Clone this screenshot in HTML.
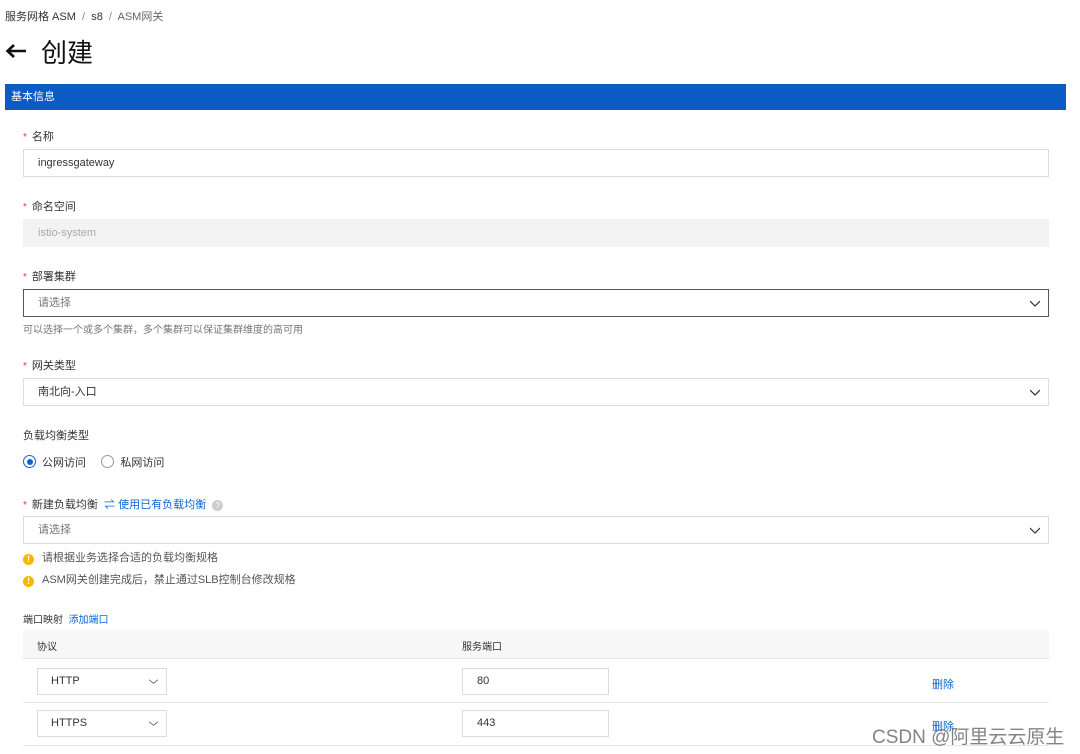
<!DOCTYPE html>
<html><head><meta charset="utf-8"><style>
*{box-sizing:border-box;margin:0;padding:0}
body{width:1080px;height:754px;background:#fff;font-family:"Liberation Sans","Noto Sans CJK SC",sans-serif;color:#333;position:relative;overflow:hidden;font-size:11px}
.a{position:absolute}
.lbl{font-size:11px;color:#333}
.req::before{content:"*";color:#e33;margin-right:5px;font-size:10px}
.inp{position:absolute;left:23px;width:1026px;height:28px;border:1px solid #dcdcdc;padding-left:14px;line-height:26px;font-size:11px}
.chev{position:absolute;right:8px;top:8px;width:10px;height:10px}
.sm .chev{width:9px;height:9px;right:8px;top:8px}
.warn{display:inline-block;width:11px;height:11px;border-radius:50%;background:#f5b700;color:#fff;font-size:9px;font-weight:bold;text-align:center;line-height:11px;margin-right:8px;vertical-align:-1px}
.link{color:#0b64d6}
</style></head><body>
<div class="a" style="left:5px;top:8px;font-size:11px;color:#333">服务网格 ASM &nbsp;<span style="color:#888">/</span>&nbsp; s8 &nbsp;<span style="color:#888">/</span>&nbsp; <span style="color:#666">ASM网关</span></div>
<div class="a" style="left:5px;top:35px;font-size:26px;font-weight:normal;color:#111;line-height:36px"><svg width="22" height="16" viewBox="0 0 22 16" style="vertical-align:3px;margin-right:14px"><path d="M21 8H3M9 2L2.5 8L9 14" stroke="#111" stroke-width="2.6" fill="none"/></svg>创建</div>
<div class="a" style="left:5px;top:84px;width:1061px;height:26px;background:#0b5bc4;color:#fff;padding-left:6px;line-height:26px;font-size:11px">基本信息</div>

<div class="a lbl req" style="left:23px;top:128px">名称</div>
<div class="inp" style="top:149px">ingressgateway</div>

<div class="a lbl req" style="left:23px;top:198px">命名空间</div>
<div class="inp" style="top:219px;background:#f3f3f3;border-color:#f3f3f3;color:#aaa">istio-system</div>

<div class="a lbl req" style="left:23px;top:268px">部署集群</div>
<div class="inp" style="top:289px;border-color:#555;color:#777">请选择<svg class="chev" viewBox="0 0 10 10"><path d="M0 3L5 8L10 3" stroke="#333" fill="none" stroke-width="1.2"/></svg></div>
<div class="a" style="left:23px;top:321px;color:#777;font-size:10px">可以选择一个或多个集群，多个集群可以保证集群维度的高可用</div>

<div class="a lbl req" style="left:23px;top:357px">网关类型</div>
<div class="inp" style="top:378px">南北向-入口<svg class="chev" viewBox="0 0 10 10"><path d="M0 3L5 8L10 3" stroke="#333" fill="none" stroke-width="1.2"/></svg></div>

<div class="a lbl" style="left:23px;top:427px">负载均衡类型</div>
<div class="a" style="left:23px;top:455px;line-height:14px"><span style="display:inline-block;width:13px;height:13px;border:1px solid #0b64d6;border-radius:50%;vertical-align:-2px;position:relative;margin-right:3px"><span style="position:absolute;left:2.5px;top:2.5px;width:6px;height:6px;border-radius:50%;background:#0b64d6"></span></span> 公网访问 &nbsp;&nbsp;&nbsp;&nbsp;<span style="display:inline-block;width:13px;height:13px;border:1px solid #999;border-radius:50%;vertical-align:-2px;margin-right:3px"></span> 私网访问</div>

<div class="a lbl req" style="left:23px;top:496px">新建负载均衡 &nbsp;<span class="link">⇌ 使用已有负载均衡</span> &nbsp;<span style="display:inline-block;width:11px;height:11px;border-radius:50%;background:#ccc;color:#fff;font-size:8px;text-align:center;line-height:11px">?</span></div>
<div class="inp" style="top:516px;color:#777">请选择<svg class="chev" viewBox="0 0 10 10"><path d="M0 3L5 8L10 3" stroke="#333" fill="none" stroke-width="1.2"/></svg></div>
<div class="a" style="left:23px;top:549px;color:#555"><span class="warn">!</span>请根据业务选择合适的负载均衡规格</div>
<div class="a" style="left:23px;top:571px;color:#555"><span class="warn">!</span>ASM网关创建完成后，禁止通过SLB控制台修改规格</div>

<div class="a lbl" style="left:23px;top:611px;font-size:10px">端口映射 &nbsp;<span class="link">添加端口</span></div>
<div class="a" style="left:23px;top:630px;width:1026px;height:29px;background:#f7f7f7;border-bottom:1px solid #e5e5e5"></div>
<div class="a" style="left:37px;top:638px;font-size:10px">协议</div>
<div class="a" style="left:462px;top:638px;font-size:10px">服务端口</div>
<div class="a" style="left:23px;top:702px;width:1026px;border-top:1px solid #e5e5e5"></div>
<div class="a" style="left:23px;top:745px;width:1026px;border-top:1px solid #e5e5e5"></div>

<div class="a sm" style="left:37px;top:668px;width:130px;height:27px;border:1px solid #dcdcdc;padding-left:13px;line-height:25px">HTTP<svg class="chev" viewBox="0 0 10 10"><path d="M0 3L5 7L10 3" stroke="#666" fill="none" stroke-width="1"/></svg></div>
<div class="a" style="left:462px;top:668px;width:147px;height:27px;border:1px solid #dcdcdc;padding-left:14px;line-height:25px">80</div>
<div class="a link" style="left:932px;top:676px">删除</div>

<div class="a sm" style="left:37px;top:710px;width:130px;height:27px;border:1px solid #dcdcdc;padding-left:13px;line-height:25px">HTTPS<svg class="chev" viewBox="0 0 10 10"><path d="M0 3L5 7L10 3" stroke="#666" fill="none" stroke-width="1"/></svg></div>
<div class="a" style="left:462px;top:710px;width:147px;height:27px;border:1px solid #dcdcdc;padding-left:14px;line-height:25px">443</div>
<div class="a link" style="left:932px;top:718px">删除</div>
<div class="a" style="left:872px;top:722px;font-size:19px;color:rgba(90,90,90,0.75)">CSDN @阿里云云原生</div>
</body></html>
